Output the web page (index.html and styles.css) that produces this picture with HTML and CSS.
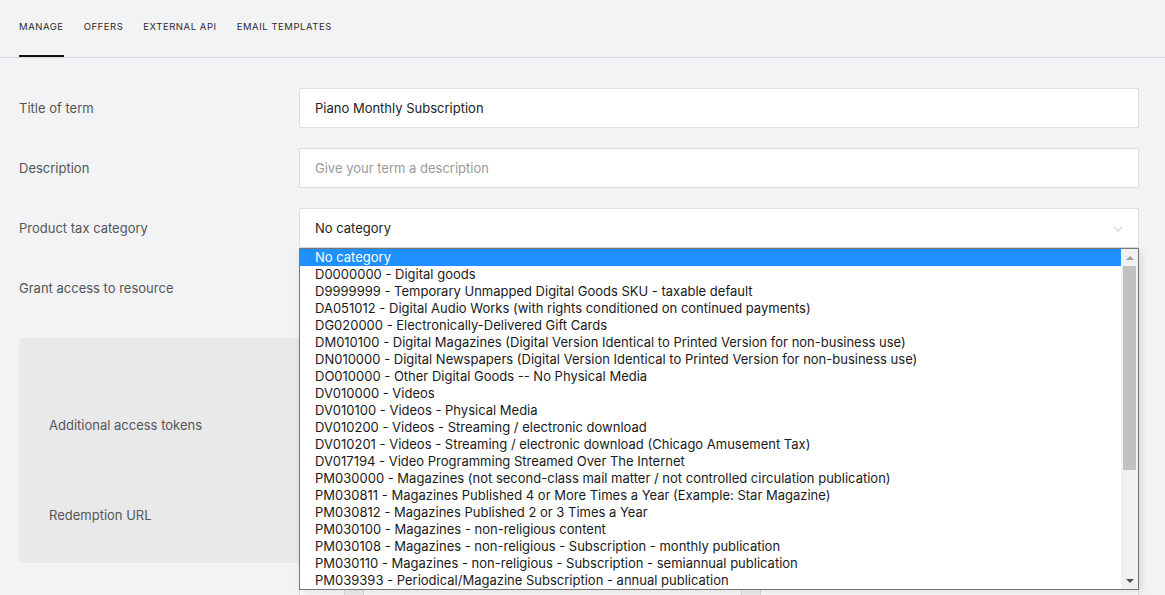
FILE: index.html
```html
<!DOCTYPE html>
<html lang="en">
<head>
  <meta charset="UTF-8">
  <meta name="viewport" content="width=device-width, initial-scale=1.0">
  <title>Manage term</title>
  <link rel="stylesheet" href="styles.css">
</head>
<body>
  <nav class="tabs">
    <a class="tab active">Manage</a>
    <a class="tab">Offers</a>
    <a class="tab">External API</a>
    <a class="tab">Email templates</a>
  </nav>

  <div class="form">
    <div class="row">
      <label>Title of term</label>
      <div class="field">Piano Monthly Subscription</div>
    </div>
    <div class="row">
      <label>Description</label>
      <div class="field placeholder">Give your term a description</div>
    </div>
    <div class="row">
      <label>Product tax category</label>
      <div class="field select">
        No category
        <svg class="chevron" width="10" height="6" viewBox="0 0 10 6"><path d="M1 1l4 4 4-4" fill="none" stroke="#d0d0d0" stroke-width="1.2"/></svg>
        <div class="dropdown">
          <ul class="options">
            <li class="selected">No category</li>
            <li>D0000000 - Digital goods</li>
            <li>D9999999 - Temporary Unmapped Digital Goods SKU - taxable default</li>
            <li>DA051012 - Digital Audio Works (with rights conditioned on continued payments)</li>
            <li>DG020000 - Electronically-Delivered Gift Cards</li>
            <li>DM010100 - Digital Magazines (Digital Version Identical to Printed Version for non-business use)</li>
            <li>DN010000 - Digital Newspapers (Digital Version Identical to Printed Version for non-business use)</li>
            <li>DO010000 - Other Digital Goods -- No Physical Media</li>
            <li>DV010000 - Videos</li>
            <li>DV010100 - Videos - Physical Media</li>
            <li>DV010200 - Videos - Streaming / electronic download</li>
            <li>DV010201 - Videos - Streaming / electronic download (Chicago Amusement Tax)</li>
            <li>DV017194 - Video Programming Streamed Over The Internet</li>
            <li>PM030000 - Magazines (not second-class mail matter / not controlled circulation publication)</li>
            <li>PM030811 - Magazines Published 4 or More Times a Year (Example: Star Magazine)</li>
            <li>PM030812 - Magazines Published 2 or 3 Times a Year</li>
            <li>PM030100 - Magazines - non-religious content</li>
            <li>PM030108 - Magazines - non-religious - Subscription - monthly publication</li>
            <li>PM030110 - Magazines - non-religious - Subscription - semiannual publication</li>
            <li>PM039393 - Periodical/Magazine Subscription - annual publication</li>
          </ul>
          <div class="scrollbar">
            <span class="arrow up"></span>
            <span class="thumb"></span>
            <span class="arrow down"></span>
          </div>
        </div>
      </div>
    </div>
    <div class="row">
      <label>Grant access to resource</label>
      <div class="field blank"></div>
    </div>

    <div class="panel">
      <div class="panel-row">
        <label>Additional access tokens</label>
      </div>
      <div class="panel-row">
        <label>Redemption URL</label>
      </div>
    </div>

    <div class="row short">
      <label></label>
      <div class="inputs">
        <div class="field mini"></div>
        <div class="field"></div>
        <div class="field"></div>
      </div>
    </div>
  </div>
</body>
</html>
```

FILE: styles.css
```css
* {
  box-sizing: border-box;
}

body {
  margin: 0;
  background: #f2f3f5;
  font-family: Inter, Roboto, sans-serif;
  color: #4d4d4d;
  overflow: hidden;
}

.tabs {
  display: flex;
  gap: 20px;
  padding: 0 19px;
  height: 58px;
  border-bottom: 1px solid #d9dadd;
}

.tab {
  display: flex;
  align-items: center;
  height: 57px;
  padding-bottom: 2px;
  font-size: 9.5px;
  letter-spacing: 0.55px;
  text-transform: uppercase;
  color: #2b2b2b;
  border-bottom: 2px solid transparent;
}

.tab.active {
  border-bottom-color: #111;
}

.form {
  padding: 30px 26px 0 19px;
  display: flex;
  flex-direction: column;
  gap: 20px;
}

.row {
  display: flex;
  align-items: center;
  height: 40px;
}

.row > label {
  width: 280px;
  flex-shrink: 0;
  font-size: 13px;
  color: #555;
}

.field {
  position: relative;
  flex: 1;
  height: 40px;
  display: flex;
  align-items: center;
  padding: 0 15px;
  background: #fff;
  border: 1px solid #dcdde0;
  border-radius: 2px;
  font-size: 13px;
  color: #222;
}

.field.placeholder {
  color: #9a9a9a;
}

.field.blank {
  visibility: hidden;
}

.chevron {
  position: absolute;
  right: 15px;
  top: 17px;
}

.dropdown {
  position: absolute;
  left: -1px;
  right: -1px;
  top: 39px;
  z-index: 5;
  display: flex;
  background: #fff;
  border: 1px solid #767676;
  box-shadow: 2px 3px 8px rgba(0,0,0,0.12);
}

.options {
  list-style: none;
  margin: 0;
  padding: 0;
  flex: 1;
}

.options li {
  height: 17px;
  line-height: 17px;
  padding-left: 15px;
  font-size: 13px;
  color: #1a1a1a;
  white-space: nowrap;
}

.options li.selected {
  background: #1e90ff;
  color: #fff;
}

.scrollbar {
  width: 17px;
  background: #f1f1f1;
  display: flex;
  flex-direction: column;
  align-items: center;
}

.arrow {
  height: 17px;
  width: 17px;
  display: flex;
  align-items: center;
  justify-content: center;
}

.arrow::before {
  content: "";
  border-left: 4px solid transparent;
  border-right: 4px solid transparent;
}

.arrow.up::before {
  border-bottom: 4px solid #a3a3a3;
}

.arrow.down {
  margin-top: auto;
}

.arrow.down::before {
  border-top: 4px solid #505050;
}

.thumb {
  width: 13px;
  height: 204px;
  background: #c1c1c1;
}

.panel {
  margin-top: 10px;
  height: 225px;
  background: #e8e9eb;
  border-radius: 4px;
  padding: 67px 30px 0;
  display: flex;
  flex-direction: column;
  gap: 50px;
}

.panel-row {
  height: 40px;
  display: flex;
  align-items: center;
}

.panel-row label {
  font-size: 13px;
  color: #555;
}

.row.short {
  margin-top: -8px;
}

.inputs {
  flex: 1;
  display: flex;
  gap: 18px;
}

.inputs .field {
  flex: 1;
}

.inputs .field.mini {
  flex: 0 0 46px;
}
```
